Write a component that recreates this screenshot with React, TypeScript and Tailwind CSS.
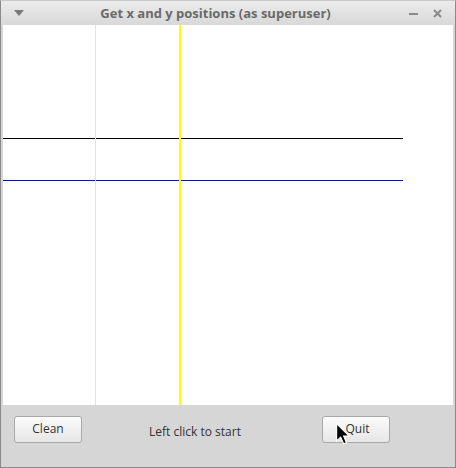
import React from "react";

export default function App() {
  return (
    <div className="w-[456px] h-[468px] bg-[#d6d6d6] flex flex-col border border-[#8a8a8a] border-t-[#c8c8c8] overflow-hidden" style={{ fontFamily: '"Open Sans", "DejaVu Sans", sans-serif' }}>
      {/* title bar */}
      <div className="h-[24px] shrink-0 flex items-center px-3 bg-gradient-to-b from-[#ececec] to-[#d8d8d8] relative">
        <svg width="10" height="6" viewBox="0 0 10 6" className="ml-[1px]"><path d="M0 0h10L5 6z" fill="#7a7a7a" /></svg>
        <div className="flex-1 text-center text-[13px] font-bold text-[#6a6a6a] leading-none -ml-[2px]">Get x and y positions (as superuser)</div>
        <div className="flex items-center gap-[15px] mr-[1px]">
          <div className="w-[9px] h-[2px] bg-[#8a8a8a] mt-[2px]" />
          <svg width="9" height="9" viewBox="0 0 9 9"><path d="M1 1L8 8M8 1L1 8" stroke="#8a8a8a" strokeWidth="2" /></svg>
        </div>
      </div>
      {/* canvas */}
      <div className="mx-[2px] h-[380px] shrink-0 bg-white relative">
        <svg width="450" height="380" className="absolute left-0 top-0">
          <line x1="0" y1="113.5" x2="400" y2="113.5" stroke="#000000" strokeWidth="1" />
          <line x1="0" y1="155.5" x2="400" y2="155.5" stroke="#0000ff" strokeWidth="1" />
          <line x1="92.5" y1="0" x2="92.5" y2="380" stroke="#ffff00" strokeWidth="1" />
          <line x1="177" y1="0" x2="177" y2="380" stroke="#ffff00" strokeWidth="2" />
        </svg>
      </div>
      {/* bottom panel */}
      <div className="flex-1 relative flex items-start pt-[11px] px-[13px]">
        <button className="w-[68px] h-[27px] rounded-[3px] border border-[#a8a8a8] bg-gradient-to-b from-[#fbfbfb] to-[#e6e6e6] text-[12px] text-[#333] pb-[2px]">Clean</button>
        <div className="flex-1 text-center text-[12px] text-[#333] pt-[7px] pr-[14px]">Left click to start</div>
        <button className="w-[68px] h-[27px] mr-[52px] rounded-[3px] border border-[#a8a8a8] bg-gradient-to-b from-[#fbfbfb] to-[#e6e6e6] text-[12px] text-[#333] pl-[3px] pb-[2px]">Quit</button>
        <svg width="14" height="22" viewBox="0 0 12 19" className="absolute left-[335px] top-[18px]">
          <path d="M0.5 0.5V15.5L4 12.2L6.5 18L9 17L6.6 11.3H11.3Z" fill="#000" stroke="#fff" strokeWidth="1" />
        </svg>
      </div>
    </div>
  );
}
